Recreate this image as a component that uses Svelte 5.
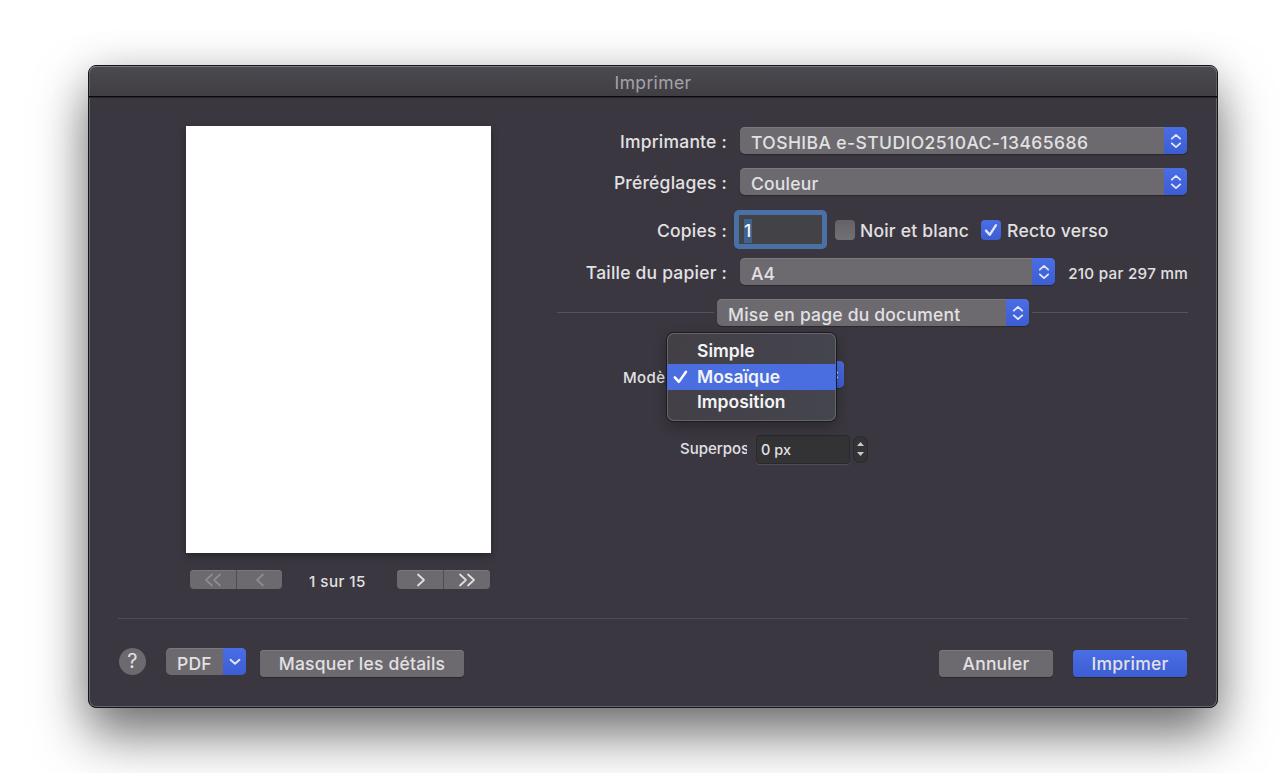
<script>
	let copies = $state('1');
	let overlap = $state('0 px');
	let current = $state('Mosaïque');
	const models = ['Simple', 'Mosaïque', 'Imposition'];
</script>

{#snippet arrows()}
	<span class="arrows">
		<svg width="12" height="16" viewBox="0 0 12 16">
			<path d="M1.8 5.6 L6 1.9 L10.2 5.6 M1.8 10.4 L6 14.1 L10.2 10.4" />
		</svg>
	</span>
{/snippet}

{#snippet popup(text, kind)}
	<button class="popup {kind}">
		<span class="popup-text">{text}</span>
		{@render arrows()}
	</button>
{/snippet}

<main class="window">
	<header><h1>Imprimer</h1></header>

	<div class="content">
		<section class="preview">
			<div class="paper"></div>
			<div class="pager">
				<div class="segments off">
					<button aria-label="Première page">
						<svg width="18" height="14" viewBox="0 0 18 14"><path d="M8 1.5 L2 7 L8 12.5 M16 1.5 L10 7 L16 12.5" /></svg>
					</button>
					<button aria-label="Page précédente">
						<svg width="10" height="14" viewBox="0 0 10 14"><path d="M8 1.5 L2 7 L8 12.5" /></svg>
					</button>
				</div>
				<span class="count">1 sur 15</span>
				<div class="segments">
					<button aria-label="Page suivante">
						<svg width="10" height="14" viewBox="0 0 10 14"><path d="M2 1.5 L8 7 L2 12.5" /></svg>
					</button>
					<button aria-label="Dernière page">
						<svg width="18" height="14" viewBox="0 0 18 14"><path d="M2 1.5 L8 7 L2 12.5 M10 1.5 L16 7 L10 12.5" /></svg>
					</button>
				</div>
			</div>
		</section>

		<section class="form">
			<div class="row printer">
				<span class="label">Imprimante :</span>
				{@render popup('TOSHIBA e-STUDIO2510AC-13465686', 'wide')}
			</div>
			<div class="row presets">
				<span class="label">Préréglages :</span>
				{@render popup('Couleur', 'wide')}
			</div>
			<div class="row copies">
				<span class="label">Copies :</span>
				<div class="field"><span class="selected">{copies}</span></div>
				<span class="box"></span>
				<span class="bw">Noir et blanc</span>
				<span class="box checked">
					<svg width="20" height="20" viewBox="0 0 20 20"><path d="M5 10.6 L8.7 14.8 L15 5.2" /></svg>
				</span>
				<span class="duplex">Recto verso</span>
			</div>
			<div class="row paper-size">
				<span class="label">Taille du papier :</span>
				{@render popup('A4', 'size')}
				<span class="dimensions">210 par 297 mm</span>
			</div>
			<div class="pane">
				<i class="line before"></i>
				{@render popup('Mise en page du document', 'section')}
				<i class="line after"></i>
			</div>
			<div class="row model">
				<span class="small model-label">Modè</span>
				<div class="anchor">
					{@render popup('', 'covered')}
					<ul class="menu">
						{#each models as model}
							<li class:active={model === current}>
								<span class="tick">
									{#if model === current}
										<svg width="16" height="16" viewBox="0 0 16 16"><path d="M1.8 8.4 L5.9 12.9 L13 2.8" /></svg>
									{/if}
								</span>
								<span>{model}</span>
							</li>
						{/each}
					</ul>
				</div>
			</div>
			<div class="row overlap">
				<span class="small overlap-label">Superpos</span>
				<div class="dark-field">{overlap}</div>
				<span class="stepper">
					<svg width="9" height="20" viewBox="0 0 9 20"><path d="M1 7 L4.5 3 L8 7 Z M1 13 L4.5 17 L8 13 Z" /></svg>
				</span>
			</div>
		</section>
	</div>

	<footer>
		<button class="help">?</button>
		<button class="pdf">
			<span class="pdf-text">PDF</span>
			<span class="pdf-arrow">
				<svg width="12" height="8" viewBox="0 0 12 8"><path d="M1.5 1.8 L6 5.8 L10.5 1.8" /></svg>
			</span>
		</button>
		<button class="btn details"><span>Masquer les détails</span></button>
		<span class="spacer"></span>
		<button class="btn cancel"><span>Annuler</span></button>
		<button class="btn primary"><span>Imprimer</span></button>
	</footer>
</main>

<style>
	:global(body) {
		background: #fff;
	}
	:global(#app) {
		display: flow-root;
		height: 100vh;
		overflow: hidden;
	}
	.window {
		width: 1130px;
		height: 643px;
		margin: 65px 0 0 88px;
		box-sizing: border-box;
		border: 1px solid #161519;
		border-radius: 8px;
		background: #3b3740;
		box-shadow:
			inset 0 0 0 1px #67656b,
			0 27px 52px rgba(0, 0, 0, 0.54),
			0 0 40px rgba(0, 0, 0, 0.1);
		color: #e2e1e3;
		font: 500 17.5px/27px Inter, "Liberation Sans", sans-serif;
		letter-spacing: 0.21px;
		white-space: nowrap;
	}
	button {
		border: 0;
		padding: 0;
		margin: 0;
		color: inherit;
		font: inherit;
		letter-spacing: inherit;
		flex: none;
	}
	svg {
		display: block;
		fill: none;
		stroke: #dfe5fa;
		stroke-width: 1.9;
		stroke-linecap: round;
		stroke-linejoin: round;
		flex: none;
	}
	header {
		height: 31px;
		box-sizing: border-box;
		border-bottom: 1px solid #09080a;
		border-radius: 7px 7px 0 0;
		background: linear-gradient(#4c4a52, #403e43);
		box-shadow: inset 0 1px #7b797f, inset 1px 0 #625f66, inset -1px 0 #625f66, 0 1px #28252b;
	}
	h1 {
		margin: 0;
		padding-top: 2px;
		color: #a5a3a8;
		font-size: 17.5px;
		font-weight: 400;
		letter-spacing: 0.35px;
		line-height: 29px;
		text-align: center;
	}
	.content {
		display: flex;
		gap: 66px;
		height: 521px;
		padding: 0 0 0 97px;
	}
	.preview {
		width: 305px;
		padding-top: 29px;
	}
	.paper {
		height: 427px;
		background: #fff;
		box-shadow: 0 3px 7px rgba(0, 0, 0, 0.35);
	}
	.pager {
		display: flex;
		justify-content: space-between;
		align-items: center;
		padding: 17px 1px 0 4px;
		height: 19px;
	}
	.segments {
		display: flex;
		height: 19px;
	}
	.segments button {
		display: flex;
		align-items: center;
		justify-content: center;
		width: 46px;
		background: #6c6a6f;
		box-shadow: inset 0 1px #7b797e;
	}
	.segments button:first-child {
		width: 47px;
		box-sizing: border-box;
		padding-left: 2px;
		border-right: 1px solid #4f4c53;
		border-radius: 4px 0 0 4px;
	}
	.off button:first-child {
		padding-left: 0;
	}
	.off button:last-child {
		width: 45px;
	}
	.segments button:last-child {
		border-radius: 0 4px 4px 0;
	}
	.segments svg {
		stroke: #e2e1e3;
		stroke-width: 1.7;
	}
	.off svg {
		stroke: #8d8b90;
	}
	.count {
		padding: 4px 4px 0 0;
		font-size: 15.2px;
		letter-spacing: 0.45px;
	}
	.form {
		width: 631px;
		padding-top: 30px;
	}
	.row {
		display: flex;
		align-items: center;
		height: 27px;
	}
	.label {
		width: 170px;
		margin-right: 13px;
		padding-top: 2px;
		padding-bottom: 1px;
		text-align: right;
		flex: none;
	}
	.popup {
		display: flex;
		justify-content: space-between;
		height: 27px;
		overflow: hidden;
		border-radius: 5px;
		background: #6c6a6f;
		box-shadow: inset 0 1px #7c7a7f, 0 1px 1px rgba(0, 0, 0, 0.3);
	}
	.popup-text {
		padding: 2px 0 0 11px;
	}
	.arrows {
		display: flex;
		align-items: center;
		justify-content: center;
		width: 23px;
		height: 27px;
		background: linear-gradient(#4a6ee6, #3c5dd3);
		flex: none;
	}
	.wide {
		width: 447px;
	}
	.printer .popup-text {
		letter-spacing: 0.42px;
	}
	.presets {
		margin-top: 14px;
	}
	.copies {
		margin-top: 15px;
		height: 39px;
	}
	.field {
		width: 93px;
		height: 39px;
		box-sizing: border-box;
		margin-left: -6px;
		border: 5px solid #4971a5;
		border-radius: 5px;
		background: #434246;
		padding: 4px 0 0 5px;
		line-height: 24px;
		flex: none;
	}
	.selected {
		display: inline-block;
		width: 8px;
		background: #3f638f;
		color: #f5f5f6;
	}
	.box {
		width: 20px;
		height: 20px;
		margin-left: 8px;
		border-radius: 4px;
		background: linear-gradient(#646267, #717075);
		flex: none;
	}
	.checked {
		margin-left: 12px;
		background: linear-gradient(#4a6ee6, #3c5dd3);
	}
	.checked svg {
		stroke-width: 2.4;
	}
	.bw,
	.duplex {
		margin-left: 6px;
		padding-top: 1px;
	}
	.bw {
		margin-left: 5px;
	}
	.paper-size {
		margin-top: 9px;
	}
	.size {
		width: 315px;
	}
	.dimensions {
		margin-left: auto;
		padding-top: 3px;
		font-size: 15.2px;
		letter-spacing: 0.28px;
	}
	.pane {
		display: flex;
		align-items: center;
		margin-top: 14px;
	}
	.line {
		height: 1px;
		background: #55525a;
	}
	.before {
		width: 157px;
		margin-right: 3px;
	}
	.after {
		flex: 1;
		margin-left: 3px;
	}
	.section {
		width: 312px;
	}
	.model {
		margin-top: 35px;
	}
	.small {
		font-size: 15px;
		flex: none;
	}
	.model-label {
		width: 43px;
		padding: 5px 0 0 66px;
		letter-spacing: 0.4px;
	}
	.anchor {
		position: relative;
	}
	.covered {
		width: 178px;
	}
	.menu {
		position: absolute;
		z-index: 1;
		top: -28px;
		left: 1px;
		width: 169px;
		height: 88px;
		box-sizing: border-box;
		margin: 0;
		padding: 5px 0;
		border-radius: 7px;
		list-style: none;
		background: linear-gradient(100deg, #424045, #454550);
		box-shadow:
			inset 0 0 0 1px #67656b,
			0 0 0 1px #1b1a1d,
			0 5px 14px rgba(0, 0, 0, 0.3);
		color: #f4f4f5;
		font-weight: 600;
		letter-spacing: 0;
		line-height: 25px;
	}
	.menu li {
		display: flex;
		align-items: center;
		height: 26px;
	}
	.menu li > :last-child {
		padding-bottom: 1px;
	}
	.menu li:last-child > :last-child {
		padding-bottom: 3px;
	}
	.tick {
		width: 24px;
		padding-left: 6px;
	}
	.tick svg {
		stroke: #fff;
		stroke-width: 2.5;
	}
	.menu .active {
		background: #4a6ee0;
	}
	.overlap {
		margin-top: 47px;
		height: 28px;
	}
	.overlap-label {
		width: 67px;
		padding: 0 0 1px 123px;
		letter-spacing: 0;
		overflow: hidden;
	}
	.dark-field {
		width: 94px;
		height: 29px;
		box-sizing: border-box;
		margin-left: 9px;
		padding: 0 0 0 4px;
		border: 1px solid #2a292b;
		border-radius: 3px;
		background: #333234;
		box-shadow: 0 1px #4f4c53;
		font-size: 14.5px;
		letter-spacing: 0;
	}
	.stepper {
		display: flex;
		align-items: center;
		justify-content: center;
		width: 13px;
		height: 25px;
		margin-left: 4px;
		border-radius: 6px;
		background: #333234;
		box-shadow: 0 0 0 1px #2b292d;
	}
	.stepper svg {
		fill: #c9c8ca;
		stroke: none;
	}
	footer {
		display: flex;
		width: 1070px;
		height: 60px;
		margin-left: 29px;
		padding-top: 31px;
		box-sizing: border-box;
		border-top: 1px solid #4e4b53;
	}
	.help {
		width: 27px;
		height: 27px;
		margin: -2px 0 0 1px;
		border-radius: 50%;
		background: #6c6a6f;
		font-size: 20px;
		font-weight: 400;
	}
	.pdf {
		display: flex;
		width: 80px;
		height: 27px;
		margin: -2px 0 0 20px;
		border-radius: 5px;
		overflow: hidden;
		background: #6c6a6f;
		box-shadow: inset 0 1px #7c7a7f;
	}
	.pdf-text {
		width: 57px;
		padding: 2px 0 0 11px;
		box-sizing: border-box;
		text-align: left;
	}
	.pdf-arrow {
		display: flex;
		align-items: center;
		justify-content: center;
		width: 23px;
		height: 27px;
		background: linear-gradient(#4a6ee6, #3c5dd3);
	}
	.btn {
		height: 27px;
		padding-bottom: 1px;
		border-radius: 4px;
		background: #6c6a6f;
		box-shadow: inset 0 1px #7c7a7f, 0 1px 1px rgba(0, 0, 0, 0.3);
	}
	.details {
		width: 204px;
		margin-left: 14px;
	}
	.spacer {
		flex: 1;
	}
	.cancel {
		width: 114px;
		margin-right: 20px;
	}
	.primary {
		width: 114px;
		margin-right: 1px;
		background: linear-gradient(#4a6ee6, #3c5dd3);
		box-shadow: 0 1px 1px rgba(0, 0, 0, 0.3);
	}
</style>
